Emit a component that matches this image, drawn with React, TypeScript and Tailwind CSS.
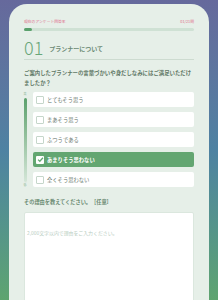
import React from 'react';

const options = [
  { label: 'とてもそう思う', checked: false },
  { label: 'まあそう思う', checked: false },
  { label: 'ふつうである', checked: false },
  { label: 'あまりそう思わない', checked: true },
  { label: '全くそう思わない', checked: false },
];

const App: React.FC = () => {
  return (
    <div
      className="w-[218px] h-[300px] overflow-hidden bg-linear-to-b from-[#66699c] via-[#4e82a2] to-[#5ea46f] pt-[4px] px-[9px]"
      style={{ fontFamily: '"Noto Sans CJK JP", "Noto Sans", sans-serif' }}
    >
      <div className="h-[320px] rounded-t-[18px] bg-[#e6efe8] px-[15px] pt-[15px]">
        <div className="flex justify-between items-center h-[6px] text-[3.8px] leading-[6px] text-[#e0708e]">
          <span>現在のアンケート回答率</span>
          <span>01/21問</span>
        </div>
        <div className="mt-[3px] h-[3px] rounded-full bg-[#cfe1d4]">
          <div className="h-full w-[8px] rounded-full bg-[#5aa06c]" />
        </div>
        <div className="mt-[6px] flex items-center gap-[6px] h-[20px]">
          <span className="text-[18px] leading-[20px] font-extralight text-[#68a679]">01</span>
          <span className="mt-[2px] text-[6px] font-bold text-[#6b8a74]">プランナーについて</span>
        </div>
        <div className="mt-[2px] border-t border-[#cddbd0]" />
        <p className="mt-[8px] text-[5.4px] leading-[10px] font-bold text-[#5f7866]">
          ご案内したプランナーの言葉づかいや身だしなみにはご満足いただけましたか？
        </p>
        <div className="mt-[4px] flex gap-[7px]">
          <div className="w-[2px] flex flex-col items-center shrink-0 pt-[1px]">
            <span className="text-[3px] leading-[3px] text-[#8fb89a]">高</span>
            <div className="mt-[2px] w-[3px] flex-1 rounded-full bg-linear-to-b from-[#5aa06c] to-[#d4e6d8]" />
            <span className="mt-[2px] text-[3px] leading-[3px] text-[#8fb89a]">低</span>
          </div>
          <div className="flex-1 flex flex-col gap-[5px]">
            {options.map((o) => (
              <div
                key={o.label}
                className={
                  o.checked
                    ? 'h-[15px] flex items-center gap-[3px] rounded-[2px] bg-[#63a671] px-[3px]'
                    : 'h-[15px] flex items-center gap-[3px] rounded-[2px] bg-white px-[3px]'
                }
              >
                {o.checked ? (
                  <span className="w-[8px] h-[8px] rounded-[1px] bg-white flex items-center justify-center">
                    <svg viewBox="0 0 10 10" className="w-[7px] h-[7px]">
                      <path d="M1.5 5.2 L4 7.5 L8.5 2.5" fill="none" stroke="#63a671" strokeWidth="1.8" />
                    </svg>
                  </span>
                ) : (
                  <span className="w-[8px] h-[8px] rounded-[1px] border border-[#c5d6ca] bg-white" />
                )}
                <span
                  className={
                    o.checked
                      ? 'text-[5.3px] leading-[6px] font-bold text-white'
                      : 'text-[5.3px] leading-[6px] text-[#6b7a70]'
                  }
                >
                  {o.label}
                </span>
              </div>
            ))}
          </div>
        </div>
        <p className="mt-[11px] text-[5.2px] leading-[8px] font-bold text-[#6a8a72]">
          その理由を教えてください。［任意］
        </p>
        <div className="mt-[6px] h-[100px] rounded-[2px] border border-[#dbe7de] bg-white px-[2px] pt-[3px]">
          <span className="text-[4.9px] leading-[6px] text-[#b9cdbf]">2,000文字以内で理由をご入力ください。</span>
        </div>
      </div>
    </div>
  );
};

export default App;
